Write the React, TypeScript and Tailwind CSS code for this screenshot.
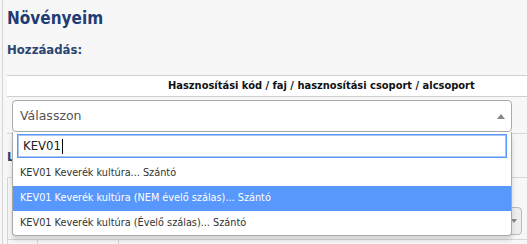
import React from 'react';

const options = [
  'KEV01 Keverék kultúra... Szántó',
  'KEV01 Keverék kultúra (NEM évelő szálas)... Szántó',
  'KEV01 Keverék kultúra (Évelő szálas)... Szántó',
];

export default function App() {
  const highlighted = 1;

  return (
    <div className="relative w-[527px] h-[244px] overflow-hidden bg-[#f7f7f7] font-['DejaVu_Sans_Condensed','Liberation_Sans',sans-serif]">
      <div className="ml-[2px] h-full border-l border-[#d6d6d6] pl-[4px]">
        {/* Page title */}
        <h1 className="pt-[8px] text-[17px] leading-[21px] font-bold text-[#1f3c73]">Növényeim</h1>
        <h2 className="mt-[13px] text-[13px] leading-[16px] font-bold text-[#2b4570]">Hozzáadás:</h2>

        {/* Add table */}
        <div className="mt-[17px] w-[560px] border-t border-[#cfcfcf]">
          <div className="h-[21px] bg-white border-b border-[#cfcfcf] flex items-center">
            <span className="pl-[161px] text-[11px] font-bold text-[#111] whitespace-nowrap">
              Hasznosítási kód / faj / hasznosítási csoport / alcsoport
            </span>
          </div>
          <div className="h-[37px] border-b border-[#d6d6d6] pl-[5px] pt-[3px]">
            <div className="w-[500px] h-[32px] bg-white border border-[#aaa] rounded-[4px] flex items-center justify-between pl-[7px] pr-[6px]">
              <span className="text-[12.5px] text-[#555] font-['DejaVu_Sans',sans-serif]">Válasszon</span>
              <span className="w-0 h-0 border-x-[4px] border-x-transparent border-b-[5px] border-b-[#888]" />
            </div>
          </div>
        </div>

        {/* List section underneath */}
        <div className="mt-[15px] text-[13px] leading-[16px] font-bold text-[#2b4570]">Lista:</div>
        <div className="mt-[12px] w-[560px] border-t border-l border-[#d6d6d6]">
          <div className="h-[62px] border-b border-[#d6d6d6] flex justify-end pr-[45px] pt-[29px]">
            <div className="w-[20px] h-[28px] bg-[#eee] border border-[#bbb] rounded-[4px] flex items-center justify-end pr-[4px]">
              <span className="w-0 h-0 border-x-[3px] border-x-transparent border-t-[4px] border-t-[#888]" />
            </div>
          </div>
          <div className="flex h-[20px]">
            <div className="w-[30px] border-r border-[#d6d6d6]" />
            <div className="w-[81px] border-r border-[#d6d6d6]" />
          </div>
        </div>
      </div>

      {/* Open select dropdown */}
      <div className="absolute left-[12px] top-[132px] w-[500px] h-[104px] bg-white border border-[#aaa] border-t-0 rounded-b-[4px] shadow-[0_4px_5px_rgba(0,0,0,0.15)]">
        <div className="px-[4px] pt-[2px]">
          <div className="h-[24px] border border-[#5897fb] shadow-[inset_0_0_0_1px_#a9c6f5] flex items-center pl-[5px]">
            <span className="text-[13px] text-[#222]">KEV01</span>
            <span className="w-[1px] h-[15px] bg-black ml-[1px]" />
          </div>
        </div>
        <div className="mt-[3px]">
          {options.map((opt, i) => (
            <div
              key={i}
              className={`h-[25px] flex items-center pl-[7px] text-[10.8px] whitespace-nowrap ${
                i === highlighted ? 'bg-[#5897fb] text-white' : 'text-[#333]'
              }`}
            >
              {opt}
            </div>
          ))}
        </div>
      </div>
    </div>
  );
}
